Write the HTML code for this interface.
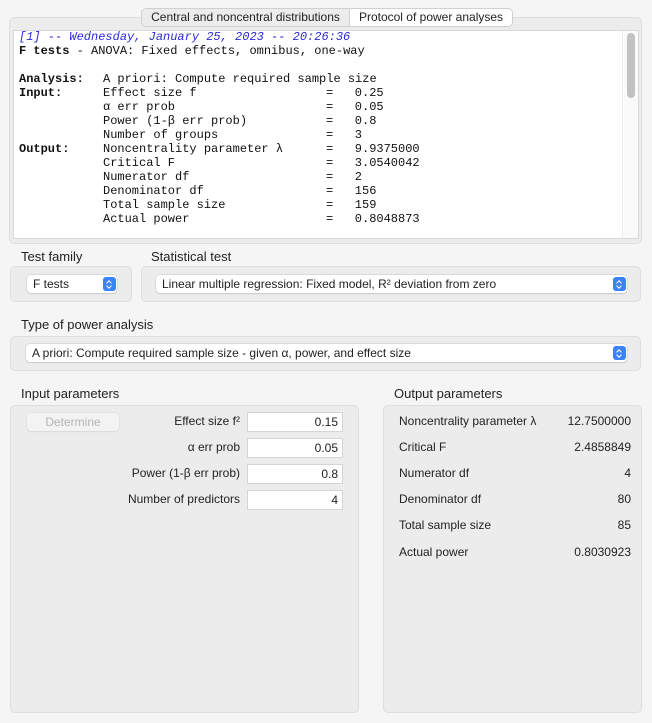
<!DOCTYPE html>
<html><head><meta charset="utf-8"><style>
*{margin:0;padding:0;box-sizing:border-box}
body{width:652px;height:723px;background:#f5f5f5;position:relative;overflow:hidden;font-family:"Liberation Sans",sans-serif;color:#222}
.a{position:absolute}
.panel{position:absolute;background:#ececec;border:1px solid #dedede;border-radius:5px}
.tab{position:absolute;top:8px;height:19px;font-size:12px;line-height:17px;text-align:center;border:1px solid #d0d0d0;background:#ececec}
.mono{position:absolute;font-family:"Liberation Mono",monospace;font-size:12px;line-height:14px;white-space:pre;color:#111}
.lbl{position:absolute;font-size:13px;line-height:16px;color:#222}
.sel{position:absolute;background:#fff;border-radius:4px;box-shadow:0 0 0 0.5px #c8c8c8,0 1px 1px rgba(0,0,0,.15);font-size:12px;line-height:18px;padding-left:6px;color:#222}
.step{position:absolute;right:1px;top:2px;width:13px;height:14px;background:#3b82f6;border-radius:3px}
.step:before,.step:after{content:"";position:absolute;left:4px;width:3px;height:3px;border-left:1.3px solid #fff;border-top:1.3px solid #fff}
.step:before{top:4px;transform:rotate(45deg)}
.step:after{top:7px;transform:rotate(225deg)}
.inp{position:absolute;left:247px;width:96px;height:20px;background:#fff;border:1px solid #d4d4d4;font-size:12px;line-height:18px;text-align:right;padding-right:4px}
.il{position:absolute;right:412px;font-size:12px;line-height:16px;text-align:right;white-space:nowrap}
.ol{position:absolute;left:399px;font-size:12px;line-height:16px}
.ov{position:absolute;right:21px;font-size:12px;line-height:16px;text-align:right}
</style></head><body>
<div class="panel" style="left:9px;top:17px;width:633px;height:227px"></div>
<div class="tab" style="left:141px;width:209px;border-radius:5px 0 0 5px">Central and noncentral distributions</div>
<div class="tab" style="left:349px;width:164px;background:#fff;border-radius:0 5px 5px 0">Protocol of power analyses</div>
<div class="a" style="left:13px;top:30px;width:626px;height:209px;background:#fff;border:1px solid #d8d8d8"></div>
<div class="a" style="left:622px;top:31px;width:16px;height:207px;border-left:1px solid #eee;background:#fafafa"></div>
<div class="a" style="left:627px;top:33px;width:8px;height:65px;background:#c2c2c2;border-radius:4px"></div>
<div class="mono" style="left:19px;top:30px;color:#2b2bd8;font-style:italic">[1] -- Wednesday, January 25, 2023 -- 20:26:36</div>
<div class="mono" style="left:19px;top:44px"><b>F tests</b> - ANOVA: Fixed effects, omnibus, one-way</div>
<div class="mono" style="left:19px;top:72px;font-weight:bold">Analysis:
Input:



Output:</div>
<div class="mono" style="left:103px;top:72px">A priori: Compute required sample size
Effect size f
α err prob
Power (1-β err prob)
Number of groups
Noncentrality parameter λ
Critical F
Numerator df
Denominator df
Total sample size
Actual power</div>
<div class="mono" style="left:326px;top:86px">=   0.25
=   0.05
=   0.8
=   3
=   9.9375000
=   3.0540042
=   2
=   156
=   159
=   0.8048873</div>

<div class="lbl" style="left:21px;top:249px">Test family</div>
<div class="lbl" style="left:151px;top:249px">Statistical test</div>
<div class="panel" style="left:10px;top:266px;width:122px;height:36px"></div>
<div class="panel" style="left:141px;top:266px;width:500px;height:36px"></div>
<div class="sel" style="left:27px;top:275px;width:90px;height:18px">F tests<div class="step"></div></div>
<div class="sel" style="left:156px;top:275px;width:471px;height:18px">Linear multiple regression: Fixed model, R² deviation from zero<div class="step"></div></div>

<div class="lbl" style="left:21px;top:317px">Type of power analysis</div>
<div class="panel" style="left:10px;top:336px;width:631px;height:35px"></div>
<div class="sel" style="left:26px;top:344px;width:601px;height:18px">A priori: Compute required sample size - given α, power, and effect size<div class="step"></div></div>

<div class="lbl" style="left:21px;top:386px">Input parameters</div>
<div class="lbl" style="left:394px;top:386px">Output parameters</div>
<div class="panel" style="left:10px;top:405px;width:349px;height:308px"></div>
<div class="panel" style="left:383px;top:405px;width:259px;height:308px"></div>

<div class="a" style="left:27px;top:413px;width:92px;height:18px;background:#f3f3f3;border-radius:4px;box-shadow:0 0 0 0.5px #d8d8d8,0 1px 1px rgba(0,0,0,.08);color:#b4b4b4;font-size:12px;line-height:18px;text-align:center">Determine</div>
<div class="il" style="top:413px">Effect size f²</div>
<div class="il" style="top:439px">α err prob</div>
<div class="il" style="top:465px">Power (1-β err prob)</div>
<div class="il" style="top:491px">Number of predictors</div>
<div class="inp" style="top:412px">0.15</div>
<div class="inp" style="top:438px">0.05</div>
<div class="inp" style="top:464px">0.8</div>
<div class="inp" style="top:490px">4</div>

<div class="ol" style="top:413px">Noncentrality parameter λ</div>
<div class="ol" style="top:439px">Critical F</div>
<div class="ol" style="top:465px">Numerator df</div>
<div class="ol" style="top:491px">Denominator df</div>
<div class="ol" style="top:517px">Total sample size</div>
<div class="ol" style="top:544px">Actual power</div>
<div class="ov" style="top:413px">12.7500000</div>
<div class="ov" style="top:439px">2.4858849</div>
<div class="ov" style="top:465px">4</div>
<div class="ov" style="top:491px">80</div>
<div class="ov" style="top:517px">85</div>
<div class="ov" style="top:544px">0.8030923</div>
</body></html>
